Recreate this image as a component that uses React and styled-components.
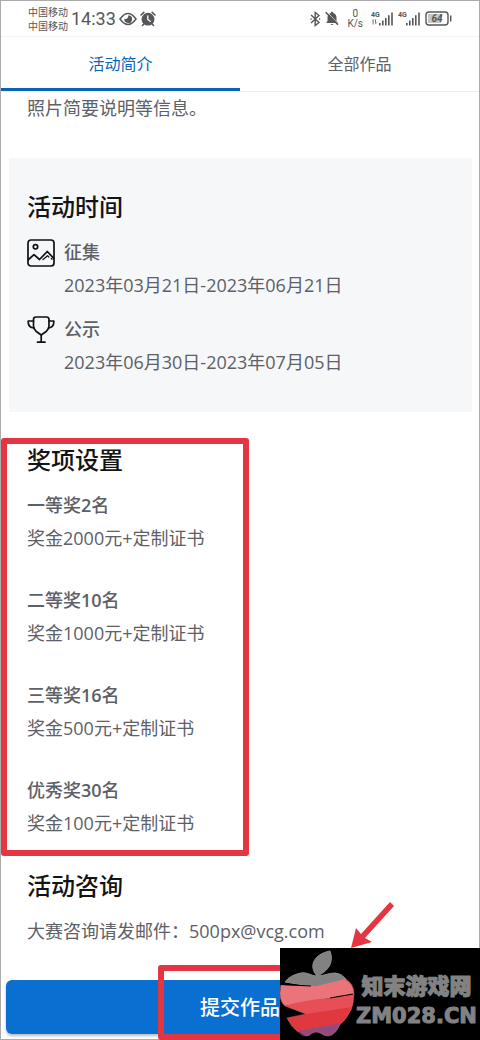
import React from "react";
import styled, { createGlobalStyle } from "styled-components";

const GlobalStyle = createGlobalStyle`
  * { box-sizing: border-box; }
  body {
    margin: 0;
    background: #fff;
    color: #5d6066;
    font-family: "Open Sans", "Noto Sans CJK SC", sans-serif;
    font-size: 18px;
    line-height: 33px;
  }
  h2, h3, p { margin: 0; }
`;
const Screen = styled.div`
  min-height: 100vh;
  display: flex;
  flex-direction: column;
  border: 1px solid #aaabad;
`;
const StatusBar = styled.header`
  display: flex;
  align-items: center;
  justify-content: space-between;
  height: 36px;
  padding: 0 27px;
  border-bottom: 1px solid #f2f2f3;
  color: #55575a;
`;
const StatusGroup = styled.div`
  display: flex;
  align-items: center;
  gap: ${(p) => p.$gap}px;
`;
const Carrier = styled.div`
  font-size: 10px;
  line-height: 14px;
`;
const Clock = styled.time`
  font-family: Roboto, sans-serif;
  font-size: 18px;
  line-height: 20px;
`;
const Speed = styled.div`
  font-family: Roboto, sans-serif;
  font-size: 10px;
  line-height: 10px;
  text-align: center;
  margin: 0 4px;
`;
const Tabs = styled.nav`
  display: grid;
  grid-template-columns: 1fr 1fr;
  border-bottom: 1px solid #eeeeef;
`;
const Tab = styled.button`
  height: 54px;
  padding: 2px 0 0;
  border: 0;
  border-bottom: 3px solid ${(p) => (p.$active ? "#0a62b5" : "transparent")};
  background: none;
  color: ${(p) => (p.$active ? "#0a66bd" : "#5d6066")};
  font: inherit;
  font-size: 16px;
  line-height: 24px;
`;
const Intro = styled.p`
  padding: 0 26px;
`;
const TimeCard = styled.section`
  margin: 33px 7px 0 8px;
  padding: 33px 18px;
  background: #f6f7f9;
`;
const Section = styled.section`
  position: relative;
  padding: 0 26px;
  margin-top: ${(p) => p.$top}px;
`;
const Title = styled.h2`
  margin-bottom: 13px;
  color: #141414;
  font-size: 24px;
  font-weight: 500;
  line-height: 32px;
`;
const Stage = styled.div`
  display: grid;
  grid-template-columns: 28px 1fr;
  column-gap: 9px;

  & + & { margin-top: 11px; }
  svg { margin-top: 3px; }
`;
const Label = styled.h3`
  font-size: 18px;
  font-weight: 500;
`;
const Count = styled.span`
  font-weight: 600;
`;
const Award = styled.div`
  & + & { margin-top: 29px; }
`;
const AwardFrame = styled.div`
  position: absolute;
  top: -6px;
  bottom: -16px;
  left: 0;
  width: 248px;
  border: 6px solid #e43642;
  border-radius: 3px;
`;
const Mail = styled.a`
  color: inherit;
  text-decoration: none;
`;
const Footer = styled.footer`
  position: relative;
  margin-top: auto;
  padding: 30px 5px 5px;
`;
const Submit = styled.button`
  display: block;
  width: 100%;
  height: 54px;
  border: 0;
  border-radius: 6px;
  background: #096fd0;
  box-shadow: 0 2px 3px #bbb;
  color: #fff;
  font: inherit;
  font-size: 20px;
  font-weight: 500;
`;
const SubmitFrame = styled.div`
  position: absolute;
  bottom: -1px;
  left: calc(50% - 82px);
  width: 164px;
  height: 75px;
  border: 6px solid #e43642;
  border-radius: 3px;
  pointer-events: none;
`;
const Arrow = styled.svg`
  position: absolute;
  right: 83px;
  bottom: 90px;
`;
const Watermark = styled.div`
  position: absolute;
  right: -1px;
  bottom: -1px;
  display: flex;
  align-items: center;
  width: 200px;
  height: 92px;
  background: #000;
  color: #828282;
  font-weight: 900;
  text-align: center;
`;
const Site = styled.div`
  padding-top: 12px;
`;
const SiteName = styled.div`
  font-family: "Noto Sans CJK SC", sans-serif;
  font-size: 22px;
  line-height: 32px;
  -webkit-text-stroke: 1px #828282;
`;
const SiteUrl = styled.div`
  font-family: "DejaVu Sans", sans-serif;
  font-size: 21px;
  line-height: 32px;
  -webkit-text-stroke: 1px #828282;
`;

const stages = [
  { name: "征集", range: "2023年03月21日-2023年06月21日", Icon: PhotoIcon },
  { name: "公示", range: "2023年06月30日-2023年07月05日", Icon: CupIcon },
];
const awards = [
  { name: "一等奖", count: 2, prize: "奖金2000元+定制证书" },
  { name: "二等奖", count: 10, prize: "奖金1000元+定制证书" },
  { name: "三等奖", count: 16, prize: "奖金500元+定制证书" },
  { name: "优秀奖", count: 30, prize: "奖金100元+定制证书" },
];

function PhotoIcon() {
  return (
    <svg width="28" height="28" viewBox="0 0 28 28" fill="none" stroke="#111" strokeWidth="1.7" strokeLinejoin="round" strokeLinecap="round">
      <rect x="1" y="1" width="26" height="26" rx="3" />
      <circle cx="8.5" cy="7.8" r="2.2" />
      <path d="M1.5 20.5l5.5-4.8 5.5 4.8 7.8-8 6.4 6.8" />
      <path d="M16 20.500l4.600-3.800 1.300 1.500M24.300 19.500l.7.8" strokeWidth="1.2" />
    </svg>
  );
}

function CupIcon() {
  return (
    <svg width="28" height="28" viewBox="0 0 28 28" fill="none" stroke="#111" strokeWidth="1.7" strokeLinejoin="round" strokeLinecap="round">
      <path d="M6.500 3.500q0-2.500 2.500-2.500h10.500q2.500 0 2.500 2.500V10q0 3-2.500 5.200L14.200 19 9 15.200Q6.500 13 6.500 10z" />
      <path d="M6.500 5H1.200Q.8 11.500 7 12M22 5h4.800Q27.200 11.500 21.500 12M14.200 19v7M10.500 26.200h7.500" />
    </svg>
  );
}

function EyeIcon() {
  return (
    <svg width="18" height="14" viewBox="0 0 18 14" fill="none" stroke="#55575a" strokeWidth="1.5">
      <path d="M1 7q8-11 16 0-8 11-16 0z" />
      <path d="M9.500 3.200a3.900 3.900 0 1 1-4.200 3.600q3.400 1.200 4.200-3.600z" fill="#55575a" stroke="none" />
    </svg>
  );
}

function AlarmIcon() {
  return (
    <svg width="16" height="16" viewBox="0 0 16 16" fill="none" stroke="#55575a" strokeWidth="1.6" strokeLinecap="round">
      <circle cx="8" cy="8.2" r="6.4" fill="#55575a" stroke="none" />
      <path d="M1 4l2.800-2.600M15 4l-2.800-2.600M3.800 13l-1.300 1.500M12.200 13l1.300 1.500" />
      <path d="M7.800 4.800v3.700l2.400 1.800" stroke="#fff" strokeWidth="1.3" />
    </svg>
  );
}

function BluetoothIcon() {
  return (
    <svg width="11" height="16" viewBox="0 0 11 16" fill="none" stroke="#55575a" strokeWidth="1.4">
      <path d="M1 4l8 7.500-3.800 3V1.500L9 4.500l-8 7.500" />
      <path d="M.5 8h1.200M9 8h1.200" />
    </svg>
  );
}

function MutedIcon() {
  return (
    <svg width="14" height="15" viewBox="0 0 14 15">
      <path d="M7 .8c.8 0 1.200.5 1.200 1.200 2.300.6 3.300 2.300 3.300 4.500v3.500l1.300 2H1.200l1.300-2V6.500c0-2.200 1-3.900 3.300-4.500C5.800 1.300 6.200.8 7 .8zM5.500 13h3q-1.500 2.200-3 0z" fill="#55575a" />
      <path d="M1.800.8l12 12.400" stroke="#fff" strokeWidth=".8" />
      <path d="M.7 1.200l12.300 12.400" stroke="#55575a" strokeWidth="1.5" />
    </svg>
  );
}

function SignalIcon({ data }) {
  return (
    <svg width="23" height="15" viewBox="0 0 23 15" fill="#55575a">
      <text x="0" y="6" fontFamily="Roboto, sans-serif" fontSize="7" fontWeight="700">4G</text>
      {data && <path d="M1 9.500l1.500-1.500v5.500H1.700V9.500zM4 8.500h1v3h.8l-1.300 2z" />}
      <path d="M8 12h1.600v2.500H8zM11 9.500h1.600v5H11zM14 7h1.600v7.500H14zM17 4.200h1.600v10.300H17zM20.200 1.500h1.600v13h-1.600z" />
    </svg>
  );
}

function BatteryIcon() {
  return (
    <svg width="27" height="15" viewBox="0 0 27 15">
      <rect x="3" y="3" width="13" height="9" fill="#c5c6c8" />
      <rect x="1" y="1" width="22" height="13" rx="3" fill="none" stroke="#55575a" strokeWidth="1.4" />
      <path d="M25.700 4.500v6" stroke="#55575a" strokeWidth="1.5" />
      <text x="12" y="11" textAnchor="middle" fontFamily="Roboto, sans-serif" fontSize="10" fontWeight="700" fontStyle="italic" fill="#55575a">64</text>
    </svg>
  );
}

function AppleLogo() {
  return (
    <svg width="76" height="92" viewBox="0 0 76 92">
      <g stroke="#8d8d8d" strokeWidth="1">
        <path d="M37 28C28 18 34 6 50 3c4 11-1 20-13 25z" fill="#828282" />
        <path d="M5 34q5-7 16-9c7-1 10 3 16 3 7 0 11-3 18-3q6 0 11 6l-30 8z" fill="#828282" />
      </g>
      <path d="M1 37l36 1 28-7q9 5 9 15L50 50 5 58q-5-4-5-13z" fill="#ea7479" />
      <path d="M5 58q18-6 45-8l24-4q0 9-3 17l-45 4-3-2z" fill="#e64f58" />
      <path d="M7 70l19-4 46-7q-4 11-11 17l-43 8Q11 78 7 70z" fill="#e0383f" />
      <path d="M18 83l43-8q-5 12-13 13c-5 0-7-4-12-4s-5 4-10 4q-4-1-8-5z" fill="#924b7c" />
      <path d="M1 36.500l30 1.500M50 50l23-4" fill="none" stroke="#000" />
      <path d="M4 58l22 8-20 4z" fill="#000" />
      <path d="M1 37q-4 13 4 21l21 8-19 4q4 9 11 14 4 4 8 4c5 0 5-4 10-4s7 4 12 4q7 0 12-12Q73 66 74 46q0-10-8-15" fill="none" stroke="#b26b70" strokeWidth=".6" />
    </svg>
  );
}

export default function App() {
  return (
    <Screen>
      <GlobalStyle />
      <StatusBar>
        <StatusGroup $gap={3}>
          <Carrier>
            <div>中国移动</div>
            <div>中国移动</div>
          </Carrier>
          <Clock>14:33</Clock>
          <EyeIcon />
          <AlarmIcon />
        </StatusGroup>
        <StatusGroup $gap={4}>
          <BluetoothIcon />
          <MutedIcon />
          <Speed>
            <div>0</div>
            <div>K/s</div>
          </Speed>
          <SignalIcon data />
          <SignalIcon />
          <BatteryIcon />
        </StatusGroup>
      </StatusBar>
      <Tabs>
        <Tab type="button" $active>活动简介</Tab>
        <Tab type="button">全部作品</Tab>
      </Tabs>
      <Intro>照片简要说明等信息。</Intro>
      <TimeCard>
        <Title>活动时间</Title>
        {stages.map(({ name, range, Icon }) => (
          <Stage key={name}>
            <Icon />
            <div>
              <Label>{name}</Label>
              <p>{range}</p>
            </div>
          </Stage>
        ))}
      </TimeCard>
      <Section $top={32}>
        <Title>奖项设置</Title>
        {awards.map(({ name, count, prize }) => (
          <Award key={name}>
            <Label>{name}<Count>{count}</Count>名</Label>
            <p>{prize}</p>
          </Award>
        ))}
        <AwardFrame />
      </Section>
      <Section $top={30}>
        <Title>活动咨询</Title>
        <p>大赛咨询请发邮件：<Mail href="mailto:500px@vcg.com">500px@vcg.com</Mail></p>
      </Section>
      <Footer>
        <Submit type="button">提交作品</Submit>
        <SubmitFrame />
        <Arrow width="48" height="50" viewBox="0 0 48 50">
          <path d="M42 3l4 4-29 32 7 4L3 49 8 29l5 6z" fill="#e43642" />
        </Arrow>
        <Watermark>
          <AppleLogo />
          <Site>
            <SiteName>知末游戏网</SiteName>
            <SiteUrl>ZM028.CN</SiteUrl>
          </Site>
        </Watermark>
      </Footer>
    </Screen>
  );
}
